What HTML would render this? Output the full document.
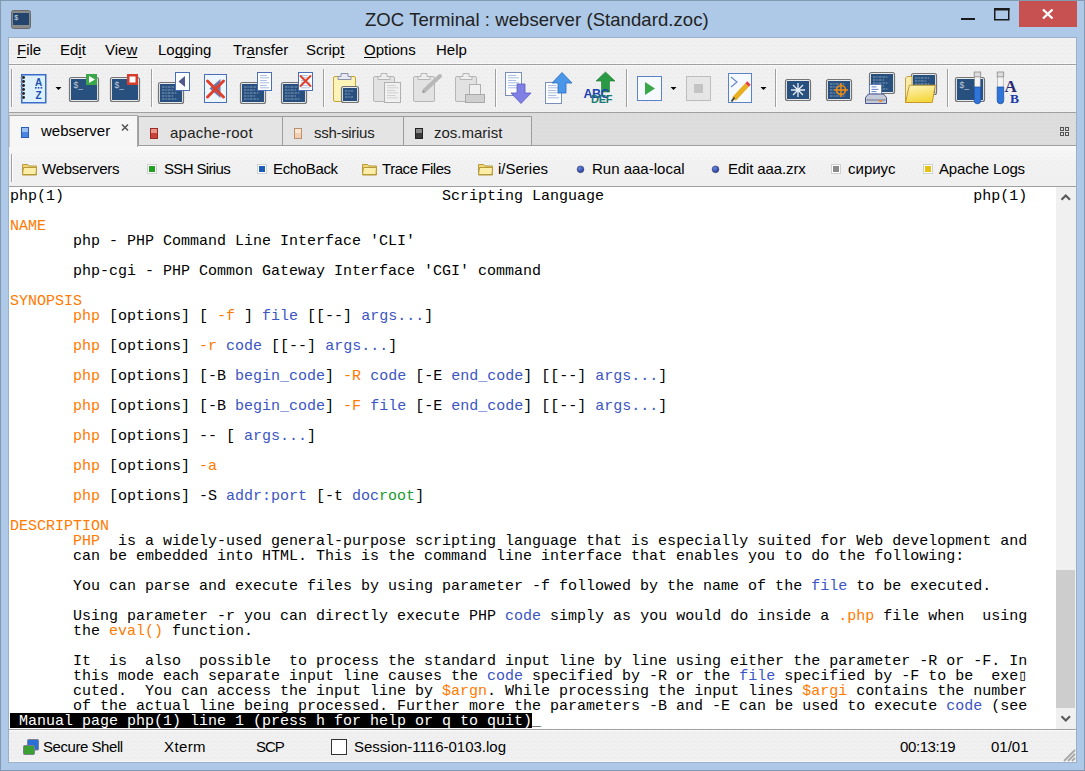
<!DOCTYPE html>
<html><head><meta charset="utf-8">
<style>
*{margin:0;padding:0;box-sizing:border-box}
html,body{width:1085px;height:771px;overflow:hidden}
body{position:relative;background:#adc9e7;font-family:"Liberation Sans",sans-serif;color:#000}
.a{position:absolute}
#frame{position:absolute;left:0;top:0;width:1085px;height:771px;border:1px solid #8399b2}
#title{position:absolute;left:365px;top:9px;white-space:nowrap;font-size:18.5px;letter-spacing:0.07px;color:#222}
#inner{position:absolute;left:8px;top:37px;width:1069px;height:726px;border:1px solid #9bb1c9;background:#f0f0f0}
.hl{position:absolute;left:9px;width:1067px;height:1px}
.menu{position:absolute;top:41px;font-size:15px;color:#000}
.u{text-decoration:underline;text-underline-offset:2px;text-decoration-skip-ink:none}
#tabbar{position:absolute;left:9px;top:113px;width:1067px;height:32px;background:#dcdcdc}
#term{position:absolute;left:9px;top:187px;width:1047px;height:542px;background:#fff;overflow:hidden}
#scroll{position:absolute;left:1056px;top:187px;width:20px;height:542px;background:#f0f0f0}
#thumb{position:absolute;left:1056px;top:570px;width:19px;height:138px;background:#cdcdcd}
pre{font-family:"Liberation Mono",monospace;font-size:15px;line-height:15px;position:absolute;left:1px;top:2px;white-space:pre}
.o{color:#ff7a00}.b{color:#3c55c4}.g{color:#209a30}
.inv{color:#fff}
#invbar{position:absolute;left:1px;top:526px;width:522px;height:15px;background:#000}
.sb{position:absolute;top:738px;font-size:15px}
.tab{position:absolute;font-size:15px}
.bk{position:absolute;top:160px;font-size:15px}
</style></head><body>
<div id="frame"></div>
<div id="title">ZOC Terminal : webserver (Standard.zoc)</div>
<div class="a" style="left:1019px;top:1px;width:58px;height:26px;background:#c75050"></div>
<div id="inner"></div>
<div class="hl" style="top:63px;background:#f8f8f8"></div>
<div class="hl" style="top:64px;background:#a0a0a0"></div>
<div class="hl" style="top:65px;background:#fafafa"></div>
<div class="hl" style="top:112px;background:#a0a0a0"></div>
<div id="tabbar"></div>
<svg class="a" style="left:0;top:0" width="1085" height="771">
<defs><pattern id="dots" width="4" height="8" patternUnits="userSpaceOnUse"><rect x="1" y="1" width="1" height="1" fill="#e3e5ea"/><rect x="3" y="5" width="1" height="1" fill="#e3e5ea"/></pattern>
<linearGradient id="bkg" x1="0" y1="0" x2="0" y2="1"><stop offset="0" stop-color="#f8f8f8"/><stop offset="0.45" stop-color="#f1f1f1"/><stop offset="1" stop-color="#f0f0f0"/></linearGradient></defs>
<rect x="9" y="147" width="1067" height="39" fill="url(#bkg)"/>
<rect x="9" y="39" width="1067" height="23" fill="url(#dots)"/>
<rect x="9" y="67" width="1067" height="44" fill="url(#dots)"/>
<rect x="9" y="114" width="1067" height="30" fill="url(#dots)"/>
<rect x="9" y="150" width="1067" height="35" fill="url(#dots)" opacity="0.6"/>
<rect x="9" y="732" width="1067" height="29" fill="url(#dots)"/>
<rect x="9" y="146" width="1067" height="1" fill="#fafafa"/>
<rect x="9" y="730" width="1067" height="1" fill="#fafafa"/>
<rect x="9" y="761" width="1067" height="1" fill="#f8f8f8"/>
</svg>
<div class="hl" style="top:145px;background:#a0a0a0"></div>
<div class="hl" style="top:186px;background:#a0a0a0"></div>
<div class="hl" style="top:729px;background:#a0a0a0"></div>
<span class="menu" style="left:17px"><span class="u">F</span>ile</span>
<span class="menu" style="left:60px">Ed<span class="u">i</span>t</span>
<span class="menu" style="left:105px">Vie<span class="u">w</span></span>
<span class="menu" style="left:158px">Lo<span class="u">g</span>ging</span>
<span class="menu" style="left:233px">Tr<span class="u">a</span>nsfer</span>
<span class="menu" style="left:306px">Scrip<span class="u">t</span></span>
<span class="menu" style="left:364px"><span class="u">O</span>ptions</span>
<span class="menu" style="left:436px">Help</span>
<div class="a" style="left:9px;top:115px;width:129px;height:32px;background:#f6f6f6;border:1px solid #a8a8a8;border-bottom:none;border-left-color:#c8c8c8"></div>
<div class="a" style="left:138px;top:116px;width:145px;height:30px;background:#e4e4e4;border:1px solid #9c9c9c"></div>
<div class="a" style="left:282px;top:116px;width:122px;height:30px;background:#e4e4e4;border:1px solid #9c9c9c"></div>
<div class="a" style="left:403px;top:116px;width:129px;height:30px;background:#e4e4e4;border:1px solid #9c9c9c"></div>
<span class="tab" style="left:41px;top:122px">webserver</span>
<span class="tab" style="left:170px;top:124px;color:#222;letter-spacing:0.25px">apache-root</span>
<span class="tab" style="left:314px;top:124px;color:#222;letter-spacing:-0.3px">ssh-sirius</span>
<span class="tab" style="left:434px;top:124px;color:#222">zos.marist</span>
<span class="bk" style="left:42px;letter-spacing:-0.25px">Webservers</span>
<span class="bk" style="left:164px;letter-spacing:-0.65px">SSH Sirius</span>
<span class="bk" style="left:273px;letter-spacing:-0.35px">EchoBack</span>
<span class="bk" style="left:382px;letter-spacing:-0.45px">Trace Files</span>
<span class="bk" style="left:498px">i/Series</span>
<span class="bk" style="left:592px">Run aaa-local</span>
<span class="bk" style="left:728px;letter-spacing:-0.13px">Edit aaa.zrx</span>
<span class="bk" style="left:848px">сириус</span>
<span class="bk" style="left:939px;letter-spacing:-0.15px">Apache Logs</span>
<div id="term"><div id="invbar"></div><pre>php(1)                                          Scripting Language                                         php(1)

<span class="o">NAME</span>
       php - PHP Command Line Interface 'CLI'

       php-cgi - PHP Common Gateway Interface 'CGI' command

<span class="o">SYNOPSIS</span>
       <span class="o">php</span> [options] [ <span class="o">-f</span> ] <span class="b">file</span> [[--] <span class="b">args...</span>]

       <span class="o">php</span> [options] <span class="o">-r</span> <span class="b">code</span> [[--] <span class="b">args...</span>]

       <span class="o">php</span> [options] [-B <span class="b">begin_code</span>] <span class="o">-R</span> <span class="b">code</span> [-E <span class="b">end_code</span>] [[--] <span class="b">args...</span>]

       <span class="o">php</span> [options] [-B <span class="b">begin_code</span>] <span class="o">-F</span> <span class="b">file</span> [-E <span class="b">end_code</span>] [[--] <span class="b">args...</span>]

       <span class="o">php</span> [options] -- [ <span class="b">args...</span>]

       <span class="o">php</span> [options] <span class="o">-a</span>

       <span class="o">php</span> [options] -S <span class="b">addr:port</span> [-t <span class="b">doc</span><span class="g">root</span>]

<span class="o">DESCRIPTION</span>
       <span class="o">PHP</span>  is a widely-used general-purpose scripting language that is especially suited for Web development and
       can be embedded into HTML. This is the command line interface that enables you to do the following:

       You can parse and execute files by using parameter -f followed by the name of the <span class="b">file</span> to be executed.

       Using parameter -r you can directly execute PHP <span class="b">code</span> simply as you would do inside a <span class="o">.php</span> file when  using
       the <span class="o">eval()</span> function.

       It  is  also  possible  to process the standard input line by line using either the parameter -R or -F. In
       this mode each separate input line causes the <span class="b">code</span> specified by -R or the <span class="b">file</span> specified by -F to be  exe&#9647;
       cuted.  You can access the input line by <span class="o">$argn</span>. While processing the input lines <span class="o">$argi</span> contains the number
       of the actual line being processed. Further more the parameters -B and -E can be used to execute <span class="b">code</span> (see
<span class="inv"> Manual page php(1) line 1 (press h for help or q to quit)</span>_</pre></div><div id="scroll"></div>
<div id="thumb"></div>
<span class="sb" style="left:43px;letter-spacing:-0.45px">Secure Shell</span>
<span class="sb" style="left:164px;letter-spacing:0.4px">Xterm</span>
<span class="sb" style="left:256px;letter-spacing:-1px">SCP</span>
<span class="sb" style="left:354px">Session-1116-0103.log</span>
<span class="sb" style="left:900px;letter-spacing:-0.4px">00:13:19</span>
<span class="sb" style="left:991px">01/01</span>
<svg class="a" style="left:0;top:0" width="1085" height="771">
<rect x="11.5" y="10.5" width="19" height="18" rx="2" fill="#8a8a8a" stroke="#6a6a6a"/>
<rect x="13" y="13" width="16" height="12" fill="#23446c"/>
<text x="14.2" y="20" font-family="Liberation Sans" font-size="7" fill="#d8e0ec">$</text>
<rect x="961" y="18" width="14" height="2" fill="#1a1a1a"/>
<rect x="994.75" y="8.75" width="14" height="11" fill="none" stroke="#1a1a1a" stroke-width="1.5"/>
<rect x="994" y="8" width="15.5" height="2.5" fill="#1a1a1a"/>
<path d="M1043 9.5L1052.5 18.5M1052.5 9.5L1043 18.5" stroke="#fff" stroke-width="2.4"/>
<rect x="11" y="69" width="1" height="38" fill="#a0a0a0"/>
<rect x="12" y="69" width="1" height="38" fill="#ffffff"/>
<rect x="151" y="69" width="1" height="38" fill="#a0a0a0"/>
<rect x="152" y="69" width="1" height="38" fill="#ffffff"/>
<rect x="323" y="69" width="1" height="38" fill="#a0a0a0"/>
<rect x="324" y="69" width="1" height="38" fill="#ffffff"/>
<rect x="495" y="69" width="1" height="38" fill="#a0a0a0"/>
<rect x="496" y="69" width="1" height="38" fill="#ffffff"/>
<rect x="626" y="69" width="1" height="38" fill="#a0a0a0"/>
<rect x="627" y="69" width="1" height="38" fill="#ffffff"/>
<rect x="775" y="69" width="1" height="38" fill="#a0a0a0"/>
<rect x="776" y="69" width="1" height="38" fill="#ffffff"/>
<rect x="947" y="69" width="1" height="38" fill="#a0a0a0"/>
<rect x="948" y="69" width="1" height="38" fill="#ffffff"/>
<rect x="21.75" y="74.75" width="24" height="28" fill="#dff0fd" stroke="#3a6ccc" stroke-width="1.5"/>
<path d="M20 78.0h3" stroke="#aaa" stroke-width="1"/><circle cx="23.6" cy="77.5" r="1.4" fill="#222"/>
<path d="M20 82.0h3" stroke="#aaa" stroke-width="1"/><circle cx="23.6" cy="81.5" r="1.4" fill="#222"/>
<path d="M20 86.0h3" stroke="#aaa" stroke-width="1"/><circle cx="23.6" cy="85.5" r="1.4" fill="#222"/>
<path d="M20 90.0h3" stroke="#aaa" stroke-width="1"/><circle cx="23.6" cy="89.5" r="1.4" fill="#222"/>
<path d="M20 94.0h3" stroke="#aaa" stroke-width="1"/><circle cx="23.6" cy="93.5" r="1.4" fill="#222"/>
<path d="M20 98.0h3" stroke="#aaa" stroke-width="1"/><circle cx="23.6" cy="97.5" r="1.4" fill="#222"/>
<text x="38.5" y="85.5" font-family="Liberation Sans" font-weight="bold" font-size="10" text-anchor="middle" fill="#1d4fb0">A</text>
<rect x="35" y="87" width="1.6" height="1.6" fill="#1d4fb0"/>
<rect x="37.8" y="87" width="1.6" height="1.6" fill="#1d4fb0"/>
<rect x="40.6" y="87" width="1.6" height="1.6" fill="#1d4fb0"/>
<text x="38.5" y="98.5" font-family="Liberation Sans" font-weight="bold" font-size="10" text-anchor="middle" fill="#1d4fb0">Z</text>
<path d="M55.5 87h6l-3 3z" fill="#000"/>
<rect x="69.5" y="77.5" width="29" height="24" rx="2" fill="#e8e8e8" stroke="#747474" stroke-width="1.2"/>
<rect x="71" y="79" width="26" height="21" fill="#27507e"/>
<text x="73.5" y="88" font-family="Liberation Sans" font-size="8.5" fill="#c0cad8">$_</text>
<rect x="86" y="74" width="11" height="11" fill="#3aa84a"/><path d="M89 76v7l6-3.5z" fill="#fff"/>
<rect x="110.5" y="77.5" width="29" height="24" rx="2" fill="#e8e8e8" stroke="#747474" stroke-width="1.2"/>
<rect x="112" y="79" width="26" height="21" fill="#27507e"/>
<text x="114.5" y="88" font-family="Liberation Sans" font-size="8.5" fill="#c0cad8">$_</text>
<rect x="127" y="74" width="11" height="11" fill="#d63c2c"/><rect x="129.5" y="76.5" width="6" height="6" fill="#fff"/>
<rect x="158.5" y="82.5" width="25" height="21" rx="2" fill="#e8e8e8" stroke="#747474" stroke-width="1.2"/>
<rect x="160" y="84" width="22" height="18" fill="#27507e"/>
<path d="M162 87.0h15.3" stroke="#b4c4dc" stroke-width="0.9" stroke-dasharray="2.5 0.8 1.5 0.8 3 1" opacity="0.75"/>
<path d="M162 90.0h11.1" stroke="#b4c4dc" stroke-width="0.9" stroke-dasharray="2.5 0.8 1.5 0.8 3 1" opacity="0.75"/>
<path d="M162 93.0h15.3" stroke="#b4c4dc" stroke-width="0.9" stroke-dasharray="2.5 0.8 1.5 0.8 3 1" opacity="0.75"/>
<path d="M162 96.0h11.1" stroke="#b4c4dc" stroke-width="0.9" stroke-dasharray="2.5 0.8 1.5 0.8 3 1" opacity="0.75"/>
<path d="M162 99.0h15.3" stroke="#b4c4dc" stroke-width="0.9" stroke-dasharray="2.5 0.8 1.5 0.8 3 1" opacity="0.75"/>
<rect x="175.5" y="72.5" width="14" height="18" fill="#fbfdff" stroke="#4a6fb5" stroke-width="1"/>
<path d="M185 76v11l-6.5-5.5z" fill="#505890"/>
<rect x="204.5" y="74.5" width="22" height="28" fill="#eef6fd" stroke="#4a6fb5" stroke-width="1"/>
<path d="M220.5 79v19l-11-9.5z" fill="#6a78b0"/>
<path d="M207.5 81L223.5 97M223.5 81L207.5 97" stroke="#e0402a" stroke-width="3" stroke-linecap="round"/>
<rect x="240.5" y="82.5" width="25" height="21" rx="2" fill="#e8e8e8" stroke="#747474" stroke-width="1.2"/>
<rect x="242" y="84" width="22" height="18" fill="#27507e"/>
<path d="M244 87.0h15.3" stroke="#b4c4dc" stroke-width="0.9" stroke-dasharray="2.5 0.8 1.5 0.8 3 1" opacity="0.75"/>
<path d="M244 90.0h11.1" stroke="#b4c4dc" stroke-width="0.9" stroke-dasharray="2.5 0.8 1.5 0.8 3 1" opacity="0.75"/>
<path d="M244 93.0h15.3" stroke="#b4c4dc" stroke-width="0.9" stroke-dasharray="2.5 0.8 1.5 0.8 3 1" opacity="0.75"/>
<path d="M244 96.0h11.1" stroke="#b4c4dc" stroke-width="0.9" stroke-dasharray="2.5 0.8 1.5 0.8 3 1" opacity="0.75"/>
<path d="M244 99.0h15.3" stroke="#b4c4dc" stroke-width="0.9" stroke-dasharray="2.5 0.8 1.5 0.8 3 1" opacity="0.75"/>
<rect x="257.5" y="72.5" width="14" height="18" fill="#fbfdff" stroke="#4a6fb5" stroke-width="1"/>
<rect x="260" y="75.0" width="6.75" height="0.7" fill="#6f8fc8" opacity="0.8"/>
<rect x="260" y="77.5" width="9" height="0.7" fill="#6f8fc8" opacity="0.8"/>
<rect x="260" y="80.0" width="6.75" height="0.7" fill="#6f8fc8" opacity="0.8"/>
<rect x="260" y="82.5" width="9" height="0.7" fill="#6f8fc8" opacity="0.8"/>
<rect x="260" y="85.0" width="6.75" height="0.7" fill="#6f8fc8" opacity="0.8"/>
<rect x="260" y="87.5" width="9" height="0.7" fill="#6f8fc8" opacity="0.8"/>
<rect x="281.5" y="82.5" width="25" height="21" rx="2" fill="#e8e8e8" stroke="#747474" stroke-width="1.2"/>
<rect x="283" y="84" width="22" height="18" fill="#27507e"/>
<path d="M285 87.0h15.3" stroke="#b4c4dc" stroke-width="0.9" stroke-dasharray="2.5 0.8 1.5 0.8 3 1" opacity="0.75"/>
<path d="M285 90.0h11.1" stroke="#b4c4dc" stroke-width="0.9" stroke-dasharray="2.5 0.8 1.5 0.8 3 1" opacity="0.75"/>
<path d="M285 93.0h15.3" stroke="#b4c4dc" stroke-width="0.9" stroke-dasharray="2.5 0.8 1.5 0.8 3 1" opacity="0.75"/>
<path d="M285 96.0h11.1" stroke="#b4c4dc" stroke-width="0.9" stroke-dasharray="2.5 0.8 1.5 0.8 3 1" opacity="0.75"/>
<path d="M285 99.0h15.3" stroke="#b4c4dc" stroke-width="0.9" stroke-dasharray="2.5 0.8 1.5 0.8 3 1" opacity="0.75"/>
<rect x="298.5" y="72.5" width="14" height="18" fill="#fbfdff" stroke="#4a6fb5" stroke-width="1"/>
<rect x="301" y="75.0" width="6.75" height="0.7" fill="#6f8fc8" opacity="0.8"/>
<rect x="301" y="77.5" width="9" height="0.7" fill="#6f8fc8" opacity="0.8"/>
<rect x="301" y="80.0" width="6.75" height="0.7" fill="#6f8fc8" opacity="0.8"/>
<rect x="301" y="82.5" width="9" height="0.7" fill="#6f8fc8" opacity="0.8"/>
<rect x="301" y="85.0" width="6.75" height="0.7" fill="#6f8fc8" opacity="0.8"/>
<rect x="301" y="87.5" width="9" height="0.7" fill="#6f8fc8" opacity="0.8"/>
<path d="M300.5 76L310.5 86M310.5 76L300.5 86" stroke="#e0402a" stroke-width="2" stroke-linecap="round"/>
<rect x="333.5" y="76.5" width="22" height="25" rx="1.5" fill="#fcf3b8" stroke="#c9a338"/>
<path d="M338 79.5h13v-3h-3v-3h-7v3h-3z" fill="#e6e8f2" stroke="#8a90a6" stroke-width="1"/>
<rect x="341.5" y="86.5" width="17" height="16" rx="2" fill="#e8e8e8" stroke="#747474" stroke-width="1.2"/>
<rect x="343" y="88" width="14" height="13" fill="#27507e"/>
<path d="M345 91.0h8.1" stroke="#b4c4dc" stroke-width="0.9" stroke-dasharray="2.5 0.8 1.5 0.8 3 1" opacity="0.75"/>
<path d="M345 94.0h5.9" stroke="#b4c4dc" stroke-width="0.9" stroke-dasharray="2.5 0.8 1.5 0.8 3 1" opacity="0.75"/>
<path d="M345 97.0h8.1" stroke="#b4c4dc" stroke-width="0.9" stroke-dasharray="2.5 0.8 1.5 0.8 3 1" opacity="0.75"/>
<rect x="373.5" y="76.5" width="21" height="25" rx="1.5" fill="#e2e2e2" stroke="#b5b5b5"/>
<path d="M378 79.5h12v-3h-3v-3h-6v3h-3z" fill="#eeeeee" stroke="#b5b5b5"/>
<rect x="384.5" y="82.5" width="16" height="20" fill="#f0f0f0" stroke="#b0b0b0" stroke-width="1"/>
<rect x="387" y="85.0" width="8.25" height="0.7" fill="#b8b8b8" opacity="0.8"/>
<rect x="387" y="87.5" width="11" height="0.7" fill="#b8b8b8" opacity="0.8"/>
<rect x="387" y="90.0" width="8.25" height="0.7" fill="#b8b8b8" opacity="0.8"/>
<rect x="387" y="92.5" width="11" height="0.7" fill="#b8b8b8" opacity="0.8"/>
<rect x="387" y="95.0" width="8.25" height="0.7" fill="#b8b8b8" opacity="0.8"/>
<rect x="387" y="97.5" width="11" height="0.7" fill="#b8b8b8" opacity="0.8"/>
<rect x="413.5" y="76.5" width="21" height="25" rx="1.5" fill="#e2e2e2" stroke="#b5b5b5"/>
<path d="M418 79.5h12v-3h-3v-3h-6v3h-3z" fill="#eeeeee" stroke="#b5b5b5"/>
<path d="M424 91l16-15" stroke="#b8b8b8" stroke-width="4" stroke-linecap="round"/><path d="M424 91l-1 2" stroke="#999" stroke-width="1.5"/>
<rect x="455.5" y="76.5" width="21" height="25" rx="1.5" fill="#e2e2e2" stroke="#b5b5b5"/>
<path d="M460 79.5h12v-3h-3v-3h-6v3h-3z" fill="#eeeeee" stroke="#b5b5b5"/>
<rect x="469.5" y="84.5" width="11" height="12" fill="#f0f0f0" stroke="#b0b0b0"/>
<rect x="465.5" y="94.5" width="19" height="8" fill="#cfcfcf" stroke="#a8a8a8"/>
<rect x="505.5" y="72.5" width="16" height="23" fill="#fbfdff" stroke="#7a8fb8" stroke-width="1"/>
<rect x="508" y="75.0" width="8.25" height="0.7" fill="#6f8fc8" opacity="0.8"/>
<rect x="508" y="77.5" width="11" height="0.7" fill="#6f8fc8" opacity="0.8"/>
<rect x="508" y="80.0" width="8.25" height="0.7" fill="#6f8fc8" opacity="0.8"/>
<rect x="508" y="82.5" width="11" height="0.7" fill="#6f8fc8" opacity="0.8"/>
<rect x="508" y="85.0" width="8.25" height="0.7" fill="#6f8fc8" opacity="0.8"/>
<rect x="508" y="87.5" width="11" height="0.7" fill="#6f8fc8" opacity="0.8"/>
<path d="M517 84h8v9h6l-10 10.5l-10-10.5h6z" fill="#7f7fe6" stroke="#5a5ac0" stroke-width="0.8"/>
<rect x="545.5" y="82.5" width="16" height="21" fill="#fbfdff" stroke="#7a8fb8" stroke-width="1"/>
<rect x="548" y="85.0" width="8.25" height="0.7" fill="#6f8fc8" opacity="0.8"/>
<rect x="548" y="87.5" width="11" height="0.7" fill="#6f8fc8" opacity="0.8"/>
<rect x="548" y="90.0" width="8.25" height="0.7" fill="#6f8fc8" opacity="0.8"/>
<rect x="548" y="92.5" width="11" height="0.7" fill="#6f8fc8" opacity="0.8"/>
<rect x="548" y="95.0" width="8.25" height="0.7" fill="#6f8fc8" opacity="0.8"/>
<rect x="548" y="97.5" width="11" height="0.7" fill="#6f8fc8" opacity="0.8"/>
<path d="M558 93h8v-10h6l-10-10.5l-10 10.5h6z" fill="#4a96e8" stroke="#2a6cc0" stroke-width="0.8"/>
<path d="M601.5 92h8v-11h5.5l-9.5-9l-9.5 9h5.5z" fill="#2a9a44" stroke="#1f7a30" stroke-width="0.6"/>
<text x="583.5" y="97.5" font-family="Liberation Sans" font-weight="bold" font-size="12.5" letter-spacing="-0.5" fill="#1f44b0">ABC</text>
<text x="591" y="103.2" font-family="Liberation Sans" font-weight="bold" font-size="11" letter-spacing="-0.3" fill="#1a7a72">DEF</text>
<rect x="637.5" y="76.5" width="24" height="24" fill="#f6fafe" stroke="#5b84c8"/>
<path d="M645 82v13l10-6.5z" fill="#3aa84a"/>
<path d="M670.5 87h6l-3 3z" fill="#000"/>
<rect x="686.5" y="76.5" width="24" height="24" fill="#e6e6e6" stroke="#bdbdbd"/>
<rect x="694" y="84" width="9" height="9" fill="#c4c4c4"/>
<rect x="728.5" y="73.5" width="23" height="29" fill="#f6fafe" stroke="#5b84c8"/>
<path d="M731 77l6 5l-6 5" stroke="#6a8ad0" fill="none" stroke-width="1.2"/>
<path d="M734 99l13-14" stroke="#e8b020" stroke-width="5"/><path d="M747 85l2-2" stroke="#e04040" stroke-width="5"/><path d="M731.5 101.5l3-4" stroke="#444" stroke-width="2"/>
<path d="M760.5 87h6l-3 3z" fill="#000"/>
<rect x="785.5" y="79.5" width="25" height="21" rx="2" fill="#e8e8e8" stroke="#747474" stroke-width="1.2"/>
<rect x="787" y="81" width="22" height="18" fill="#27507e"/>
<path d="M798 83v14M791 90h14M793 85l10 10M803 85l-10 10" stroke="#e8eef8" stroke-width="1.3"/>
<rect x="826.5" y="79.5" width="25" height="21" rx="2" fill="#e8e8e8" stroke="#747474" stroke-width="1.2"/>
<rect x="828" y="81" width="22" height="18" fill="#27507e"/>
<path d="M830 84.0h15.3" stroke="#b4c4dc" stroke-width="0.9" stroke-dasharray="2.5 0.8 1.5 0.8 3 1" opacity="0.75"/>
<path d="M830 87.0h11.1" stroke="#b4c4dc" stroke-width="0.9" stroke-dasharray="2.5 0.8 1.5 0.8 3 1" opacity="0.75"/>
<path d="M830 90.0h15.3" stroke="#b4c4dc" stroke-width="0.9" stroke-dasharray="2.5 0.8 1.5 0.8 3 1" opacity="0.75"/>
<path d="M830 93.0h11.1" stroke="#b4c4dc" stroke-width="0.9" stroke-dasharray="2.5 0.8 1.5 0.8 3 1" opacity="0.75"/>
<path d="M830 96.0h15.3" stroke="#b4c4dc" stroke-width="0.9" stroke-dasharray="2.5 0.8 1.5 0.8 3 1" opacity="0.75"/>
<circle cx="841" cy="90" r="4.5" fill="none" stroke="#f08c10" stroke-width="1.6"/><path d="M841 83v14M834 90h14" stroke="#f08c10" stroke-width="1.4"/>
<rect x="869.5" y="72.5" width="25" height="21" rx="2" fill="#e8e8e8" stroke="#747474" stroke-width="1.2"/>
<rect x="871" y="74" width="22" height="18" fill="#27507e"/>
<path d="M873 77.0h15.3" stroke="#b4c4dc" stroke-width="0.9" stroke-dasharray="2.5 0.8 1.5 0.8 3 1" opacity="0.75"/>
<path d="M873 80.0h11.1" stroke="#b4c4dc" stroke-width="0.9" stroke-dasharray="2.5 0.8 1.5 0.8 3 1" opacity="0.75"/>
<path d="M873 83.0h15.3" stroke="#b4c4dc" stroke-width="0.9" stroke-dasharray="2.5 0.8 1.5 0.8 3 1" opacity="0.75"/>
<path d="M873 86.0h11.1" stroke="#b4c4dc" stroke-width="0.9" stroke-dasharray="2.5 0.8 1.5 0.8 3 1" opacity="0.75"/>
<path d="M873 89.0h15.3" stroke="#b4c4dc" stroke-width="0.9" stroke-dasharray="2.5 0.8 1.5 0.8 3 1" opacity="0.75"/>
<rect x="869.5" y="84.5" width="12" height="12" fill="#fff" stroke="#5070b0" stroke-width="0.8"/>
<rect x="871.5" y="86.5" width="5" height="0.8" fill="#3a60c0"/>
<rect x="871.5" y="88.9" width="7" height="0.8" fill="#3a60c0"/>
<rect x="871.5" y="91.3" width="5" height="0.8" fill="#3a60c0"/>
<rect x="871.5" y="93.7" width="7" height="0.8" fill="#3a60c0"/>
<path d="M865.5 103.5v-6l3-3.5h15l3 3.5v6z" fill="#c4cad8" stroke="#3c4488" stroke-width="0.9"/>
<rect x="866.5" y="99" width="19" height="2" fill="#9aa0b4"/><rect x="879" y="100" width="3" height="2" fill="#f08a30"/>
<rect x="911.5" y="73.5" width="25" height="21" rx="2" fill="#e8e8e8" stroke="#747474" stroke-width="1.2"/>
<rect x="913" y="75" width="22" height="18" fill="#27507e"/>
<path d="M915 78.0h15.3" stroke="#b4c4dc" stroke-width="0.9" stroke-dasharray="2.5 0.8 1.5 0.8 3 1" opacity="0.75"/>
<path d="M915 81.0h11.1" stroke="#b4c4dc" stroke-width="0.9" stroke-dasharray="2.5 0.8 1.5 0.8 3 1" opacity="0.75"/>
<path d="M915 84.0h15.3" stroke="#b4c4dc" stroke-width="0.9" stroke-dasharray="2.5 0.8 1.5 0.8 3 1" opacity="0.75"/>
<path d="M915 87.0h11.1" stroke="#b4c4dc" stroke-width="0.9" stroke-dasharray="2.5 0.8 1.5 0.8 3 1" opacity="0.75"/>
<path d="M915 90.0h15.3" stroke="#b4c4dc" stroke-width="0.9" stroke-dasharray="2.5 0.8 1.5 0.8 3 1" opacity="0.75"/>
<path d="M905.5 102.5v-24.5l1.5-1.5h5v26z" fill="#f8eaa8" stroke="#c09838" stroke-width="0.9"/>
<defs><linearGradient id="fy" x1="0" y1="0" x2="0.3" y2="1"><stop offset="0" stop-color="#fdf4c0"/><stop offset="1" stop-color="#f5d840"/></linearGradient></defs>
<path d="M905.5 102.5l3.8-17.3h26l-3 17.3z" fill="url(#fy)" stroke="#c09020" stroke-width="0.9"/>
<rect x="955.5" y="77.5" width="29" height="24" rx="2" fill="#e8e8e8" stroke="#747474" stroke-width="1.2"/>
<rect x="957" y="79" width="26" height="21" fill="#27507e"/>
<text x="959.5" y="88" font-family="Liberation Sans" font-size="8.5" fill="#c0cad8">$_</text>
<rect x="974.2" y="72" width="6.5" height="5" fill="#dcdcdc" stroke="#8a8a8a" stroke-width="0.8"/>
<rect x="974.7" y="77" width="5.5" height="11" fill="#f4f4f4" stroke="#9a9a9a" stroke-width="0.6"/>
<path d="M974.2 87h6.5v13.5a3.25 3.25 0 0 1 -6.5 0z" fill="#2f74d8" stroke="#1f50a8" stroke-width="0.8"/>
<rect x="997.2" y="72" width="6.5" height="5" fill="#dcdcdc" stroke="#8a8a8a" stroke-width="0.8"/>
<rect x="997.7" y="77" width="5.5" height="11" fill="#f4f4f4" stroke="#9a9a9a" stroke-width="0.6"/>
<path d="M997.2 87h6.5v13.5a3.25 3.25 0 0 1 -6.5 0z" fill="#2f74d8" stroke="#1f50a8" stroke-width="0.8"/>
<text x="1004.5" y="92" font-family="Liberation Serif" font-weight="bold" font-size="17" fill="#2a2a72">A</text>
<text x="1010" y="102.8" font-family="Liberation Serif" font-weight="bold" font-size="13.5" fill="#1a3aa8">B</text>
<rect x="21.5" y="127.5" width="7" height="10" fill="#4a86e0" stroke="#2a5cc0"/><rect x="22" y="128" width="6" height="4" fill="#9cc0f4"/>
<path d="M122 124.5l6 6M128 124.5l-6 6" stroke="#555" stroke-width="1.6"/>
<rect x="150.5" y="128.5" width="7" height="10" fill="#c8443a" stroke="#9a2a22"/><rect x="151" y="129" width="6" height="4" fill="#e8958c"/>
<rect x="294.5" y="128.5" width="7" height="10" fill="#f0d0b0" stroke="#b89070"/><rect x="295" y="129" width="6" height="4" fill="#fae6d2"/>
<rect x="415.5" y="128.5" width="7" height="10" fill="#3a3a3a" stroke="#222"/><rect x="416" y="129" width="6" height="4" fill="#888"/>
<rect x="1060.5" y="127.5" width="3" height="3" fill="none" stroke="#555"/>
<rect x="1065.5" y="127.5" width="3" height="3" fill="none" stroke="#555"/>
<rect x="1060.5" y="132.5" width="3" height="3" fill="none" stroke="#555"/>
<rect x="1065.5" y="132.5" width="3" height="3" fill="none" stroke="#555"/>
<rect x="11" y="154" width="1" height="28" fill="#a0a0a0"/>
<rect x="12" y="154" width="1" height="28" fill="#ffffff"/>
<path d="M22.5 164.5h5l1.5 1.5h7.5v9h-14z" fill="#f0d878" stroke="#b89a3a"/>
<path d="M22.5 174.5l1-7h13l-0.5 7z" fill="#fbeea8" stroke="#b89a3a"/>
<path d="M362.5 164.5h5l1.5 1.5h7.5v9h-14z" fill="#f0d878" stroke="#b89a3a"/>
<path d="M362.5 174.5l1-7h13l-0.5 7z" fill="#fbeea8" stroke="#b89a3a"/>
<path d="M478.5 164.5h5l1.5 1.5h7.5v9h-14z" fill="#f0d878" stroke="#b89a3a"/>
<path d="M478.5 174.5l1-7h13l-0.5 7z" fill="#fbeea8" stroke="#b89a3a"/>
<rect x="147.5" y="164.5" width="9" height="9" fill="#ffffff" stroke="#d0d0d0"/>
<rect x="149" y="166" width="6" height="6" fill="#22a022"/>
<rect x="257.5" y="164.5" width="9" height="9" fill="#ffffff" stroke="#d0d0d0"/>
<rect x="259" y="166" width="6" height="6" fill="#1a5cb8"/>
<rect x="831.5" y="164.5" width="9" height="9" fill="#ffffff" stroke="#d0d0d0"/>
<rect x="833" y="166" width="6" height="6" fill="#8a8a8a"/>
<rect x="923.5" y="164.5" width="9" height="9" fill="#ffffff" stroke="#d0d0d0"/>
<rect x="925" y="166" width="6" height="6" fill="#e8c010"/>
<defs><radialGradient id="bd" cx="0.4" cy="0.35" r="0.7"><stop offset="0" stop-color="#6a8ae8"/><stop offset="1" stop-color="#1a3090"/></radialGradient></defs>
<circle cx="580.5" cy="169.3" r="3.4" fill="url(#bd)" stroke="#4a5068" stroke-width="0.6"/><circle cx="715.5" cy="169.3" r="3.4" fill="url(#bd)" stroke="#4a5068" stroke-width="0.6"/>
<path d="M1061.5 199.8L1065.75 195.5L1070 199.8" stroke="#5a5a5a" stroke-width="2.2" fill="none"/>
<path d="M1061.5 716.2L1065.75 720.5L1070 716.2" stroke="#5a5a5a" stroke-width="2.2" fill="none"/>
<rect x="27.5" y="739.5" width="11" height="10.5" rx="1" fill="#2a6ed8" stroke="#7a8090"/>
<rect x="23.5" y="745.5" width="11" height="9" rx="1" fill="#3aa032" stroke="#7a8090"/>
<rect x="331.5" y="739.5" width="15" height="15" fill="#fff" stroke="#333"/>
<path d="M1064.5 760.5L1074.5 750.5M1068.5 760.5L1074.5 754.5M1072.5 760.5L1074.5 758.5" stroke="#a8a8a8" stroke-width="1.8" stroke-linecap="round"/>
</svg>
</body></html>
